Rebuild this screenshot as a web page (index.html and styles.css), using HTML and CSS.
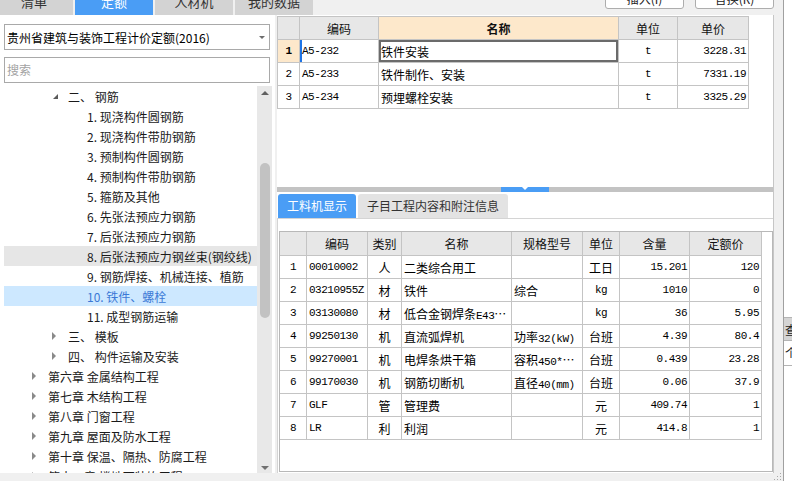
FILE: index.html
```html
<!DOCTYPE html>
<html lang="zh-CN">
<head>
<meta charset="utf-8">
<title>定额</title>
<link rel="stylesheet" href="styles.css">
</head>
<body>
<div class="app">
  <div class="topbar">
    <div class="tabs">
      <div class="tab">清单</div>
      <div class="tab on">定额</div>
      <div class="tab">人材机</div>
      <div class="tab">我的数据</div>
    </div>
    <div class="btns">
      <div class="btn">插入(I)</div>
      <div class="btn">替换(R)</div>
    </div>
  </div>
  <div class="main">
    <div class="left">
      <div class="select"><span>贵州省建筑与装饰工程计价定额(2016)</span><span class="caret"></span></div>
      <div class="search">搜索</div>
      <div class="treewrap">
        <div class="tree">
          <div class="row l1"><span class="ar e"></span>二、 钢筋</div>
          <div class="row l2"><span class="ar"></span>1. 现浇构件圆钢筋</div>
          <div class="row l2"><span class="ar"></span>2. 现浇构件带肋钢筋</div>
          <div class="row l2"><span class="ar"></span>3. 预制构件圆钢筋</div>
          <div class="row l2"><span class="ar"></span>4. 预制构件带肋钢筋</div>
          <div class="row l2"><span class="ar"></span>5. 箍筋及其他</div>
          <div class="row l2"><span class="ar"></span>6. 先张法预应力钢筋</div>
          <div class="row l2"><span class="ar"></span>7. 后张法预应力钢筋</div>
          <div class="row l2 hover"><span class="ar"></span>8. 后张法预应力钢丝束(钢绞线)</div>
          <div class="row l2"><span class="ar"></span>9. 钢筋焊接、机械连接、植筋</div>
          <div class="row l2 sel"><span class="ar"></span>10. 铁件、螺栓</div>
          <div class="row l2"><span class="ar"></span>11. 成型钢筋运输</div>
          <div class="row l1"><span class="ar c"></span>三、 模板</div>
          <div class="row l1"><span class="ar c"></span>四、 构件运输及安装</div>
          <div class="row l0"><span class="ar c"></span>第六章 金属结构工程</div>
          <div class="row l0"><span class="ar c"></span>第七章 木结构工程</div>
          <div class="row l0"><span class="ar c"></span>第八章 门窗工程</div>
          <div class="row l0"><span class="ar c"></span>第九章 屋面及防水工程</div>
          <div class="row l0"><span class="ar c"></span>第十章 保温、隔热、防腐工程</div>
          <div class="row l0"><span class="ar c"></span>第十一章 楼地面装饰工程</div>
        </div>
        <div class="vscroll">
          <span class="up"></span>
          <span class="thumb"></span>
          <span class="fill"></span>
          <span class="down"></span>
        </div>
      </div>
    </div>
    <div class="right">
      <div class="top">
        <table class="grid g1">
          <colgroup><col class="w22"><col class="w79"><col class="w240"><col class="w59"><col class="w71"></colgroup>
          <tr class="hd"><td></td><td>编码</td><td class="nm">名称</td><td>单位</td><td>单价</td></tr>
          <tr><td class="rn cur a">1</td><td class="a ind">A5-232</td><td class="selcell">铁件安装</td><td class="a ctr">t</td><td class="a rt">3228.31</td></tr>
          <tr><td class="rn a">2</td><td class="a">A5-233</td><td>铁件制作、安装</td><td class="a ctr">t</td><td class="a rt">7331.19</td></tr>
          <tr><td class="rn a">3</td><td class="a">A5-234</td><td>预埋螺栓安装</td><td class="a ctr">t</td><td class="a rt">3325.29</td></tr>
        </table>
      </div>
      <div class="split"><div class="handle"></div></div>
      <div class="subtabs">
        <div class="st on">工料机显示</div>
        <div class="st wide">子目工程内容和附注信息</div>
      </div>
      <div class="lower">
        <div class="gridbox">
          <table class="grid g2">
            <colgroup><col class="w27"><col class="w61"><col class="w34"><col class="w110"><col class="w71"><col class="w37"><col class="w70"><col class="w72"></colgroup>
            <tr class="hd"><td></td><td>编码</td><td>类别</td><td>名称</td><td>规格型号</td><td>单位</td><td>含量</td><td>定额价</td></tr>
            <tr><td class="rn a">1</td><td class="a">00010002</td><td class="ctr">人</td><td>二类综合用工</td><td></td><td class="ctr">工日</td><td class="a rt">15.201</td><td class="a rt">120</td></tr>
            <tr><td class="rn a">2</td><td class="a">03210955Z</td><td class="ctr">材</td><td>铁件</td><td>综合</td><td class="a ctr">kg</td><td class="a rt">1010</td><td class="a rt">0</td></tr>
            <tr><td class="rn a">3</td><td class="a">03130080</td><td class="ctr">材</td><td>低合金钢焊条<span class="a">E43</span>…</td><td></td><td class="a ctr">kg</td><td class="a rt">36</td><td class="a rt">5.95</td></tr>
            <tr><td class="rn a">4</td><td class="a">99250130</td><td class="ctr">机</td><td>直流弧焊机</td><td>功率<span class="a">32(kW)</span></td><td class="ctr">台班</td><td class="a rt">4.39</td><td class="a rt">80.4</td></tr>
            <tr><td class="rn a">5</td><td class="a">99270001</td><td class="ctr">机</td><td>电焊条烘干箱</td><td>容积<span class="a">450*</span>…</td><td class="ctr">台班</td><td class="a rt">0.439</td><td class="a rt">23.28</td></tr>
            <tr><td class="rn a">6</td><td class="a">99170030</td><td class="ctr">机</td><td>钢筋切断机</td><td>直径<span class="a">40(mm)</span></td><td class="ctr">台班</td><td class="a rt">0.06</td><td class="a rt">37.9</td></tr>
            <tr><td class="rn a">7</td><td class="a">GLF</td><td class="ctr">管</td><td>管理费</td><td></td><td class="ctr">元</td><td class="a rt">409.74</td><td class="a rt">1</td></tr>
            <tr><td class="rn a">8</td><td class="a">LR</td><td class="ctr">利</td><td>利润</td><td></td><td class="ctr">元</td><td class="a rt">414.8</td><td class="a rt">1</td></tr>
          </table>
        </div>
      </div>
    </div>
  </div>
  <div class="status">
    <svg class="grip" width="8" height="8" viewBox="0 0 8 8"><g fill="#a8a8a8"><rect x="6" y="0" width="1" height="1"/><rect x="3" y="3" width="1" height="1"/><rect x="6" y="3" width="1" height="1"/><rect x="0" y="6" width="1" height="1"/><rect x="3" y="6" width="1" height="1"/><rect x="6" y="6" width="1" height="1"/></g></svg>
  </div>
</div>
<div class="edge">
  <div class="ec g">查</div>
  <div class="ec">个</div>
</div>
</body>
</html>
```

FILE: styles.css
```css
* { box-sizing: border-box; }
html, body { margin: 0; padding: 0; }
body {
  width: 792px;
  height: 481px;
  overflow: hidden;
  background: #f0f0f0;
  font-family: "Noto Sans CJK SC", "Noto Sans", sans-serif;
  font-size: 12px;
  color: #000;
  display: flex;
}
.app { width: 783px; display: flex; flex-direction: column; }

/* top bar */
.topbar {
  height: 15px;
  display: flex;
  justify-content: space-between;
  align-items: flex-start;
  padding-right: 9px;
}
.tabs { display: flex; gap: 2px; margin-left: -5px; }
.tab {
  width: 78px;
  height: 26px;
  margin-top: -11px;
  background: #d3d3d3;
  color: #333;
  font-size: 13px;
  line-height: 26px;
  text-align: center;
}
.tab.on { background: #4a9df5; color: #fff; }
.btns { display: flex; gap: 11px; }
.btn {
  width: 79px;
  height: 20px;
  margin-top: -11px;
  background: #fff;
  border: 1px solid #adadad;
  border-radius: 3px;
  line-height: 18px;
  text-align: center;
  color: #222;
}

/* main */
.main { height: 458px; display: flex; }
.left {
  width: 275px;
  background: #fff;
  padding-left: 4px;
  display: flex;
  flex-direction: column;
}
.select {
  margin-top: 9px;
  width: 266px;
  height: 26px;
  border: 1px solid #a9a9a9;
  display: flex;
  align-items: center;
  justify-content: space-between;
  padding: 0 4px 0 2px;
  white-space: nowrap;
}
.caret {
  width: 0; height: 0;
  border-left: 3px solid transparent;
  border-right: 3px solid transparent;
  border-top: 3px solid #6d6d6d;
}
.search {
  margin-top: 7px;
  width: 266px;
  height: 26px;
  border: 1px solid #a9a9a9;
  color: #a3a3a3;
  padding-left: 2px;
  line-height: 24px;
}
.treewrap {
  margin-top: 3px;
  flex: 1;
  min-height: 0;
  display: flex;
  overflow: hidden;
}
.tree { width: 253px; overflow: hidden; }
.row {
  height: 20px;
  display: flex;
  align-items: center;
  white-space: nowrap;
  color: #1a1a1a;
}
.row.hover { background: #e6e6e6; }
.row.sel { background: #cde8ff; color: #3b78d6; }
.l0 { padding-left: 27px; }
.l1 { padding-left: 47px; }
.l2 { padding-left: 66px; }
.ar { width: 17px; flex: none; display: flex; align-items: center; }
.ar.c::before {
  content: "";
  margin-left: 1px;
  border-left: 4px solid #8a8a8a;
  border-top: 4px solid transparent;
  border-bottom: 4px solid transparent;
}
.ar.e::before {
  content: "";
  margin-left: 2px;
  border-right: 5px solid #5a5a5a;
  border-top: 5px solid transparent;
}
.vscroll {
  width: 15px;
  background: #e8e8e8;
  display: flex;
  flex-direction: column;
  align-items: center;
}
.up {
  margin-top: 5px;
  border-bottom: 4px solid #606060;
  border-left: 4px solid transparent;
  border-right: 4px solid transparent;
}
.thumb {
  margin-top: 68px;
  width: 10px;
  height: 155px;
  background: #c2c2c2;
  border-radius: 5px;
}
.fill { flex: 1; }
.down {
  margin-bottom: 3px;
  border-top: 4px solid #707070;
  border-left: 4px solid transparent;
  border-right: 4px solid transparent;
}

/* right */
.right {
  margin-left: 2px;
  width: 497px;
  background: #fff;
  border-right: 1px solid #c6c6c6;
  display: flex;
  flex-direction: column;
}
.top { height: 172px; padding-top: 1px; }
.grid {
  border-collapse: collapse;
  table-layout: fixed;
}
.g1 { width: 471px; }
.g2 { width: 482px; margin: -1px 0 0 -1px; }
.w22 { width: 22px; } .w79 { width: 79px; } .w240 { width: 240px; } .w59 { width: 59px; } .w71 { width: 71px; }
.w27 { width: 27px; } .w61 { width: 61px; } .w34 { width: 34px; } .w110 { width: 110px; } .w37 { width: 37px; } .w70 { width: 70px; } .w72 { width: 72px; }
.grid td {
  border: 1px solid #c4c4c4;
  padding: 0 2px;
  white-space: nowrap;
  overflow: hidden;
  height: 23px;
  vertical-align: middle;
}
.grid .hd td { background: #e7e7e7; text-align: center; color: #111; }
.g2 .hd td { height: 24px; }
.g1 .hd td.nm { background: #fde8cb; font-weight: bold; }
.a { font-family: "Liberation Mono", monospace; font-size: 11px; letter-spacing: -0.5px; }
.ctr { text-align: center; }
.rt { text-align: right; padding-right: 3px; }
.rn { text-align: center; }
.rn.cur { background: #fde8cb; font-weight: bold; }
.ind { box-shadow: inset 2px 0 0 #1e74e6; }
.selcell { box-shadow: inset 0 0 0 2px #6b6b6b; }

.split {
  height: 5px;
  background: #c3c3c3;
  display: flex;
  justify-content: center;
}
.handle {
  width: 48px;
  background: #4a9df5;
  display: flex;
  justify-content: center;
}
.handle::after {
  content: "";
  height: 0;
  border-top: 3px solid #fff;
  border-left: 3px solid transparent;
  border-right: 3px solid transparent;
}
.subtabs {
  height: 27px;
  display: flex;
  gap: 2px;
  padding: 2px 0 0 1px;
  border-bottom: 1px solid #d4d4d4;
}
.st {
  width: 78px;
  line-height: 24px;
  text-align: center;
  background: #e3e3e3;
  color: #333;
  border-radius: 3px 3px 0 0;
}
.st.on { background: #4a9df5; color: #fff; }
.st.wide { width: 150px; }
.lower {
  flex: 1;
  border-left: 1px solid #d4d4d4;
  padding: 12px 0 1px 1px;
  display: flex;
}
.gridbox {
  flex: 1;
  border: 1px solid #b8b8b8;
  overflow: hidden;
}

.status {
  flex: 1;
  display: flex;
  justify-content: flex-end;
  align-items: flex-end;
  padding: 0 1px 0 0;
}
.grip { display: block; }

.edge {
  width: 9px;
  border-left: 1px solid #a0a0a0;
  background: #fff;
  padding-top: 317px;
  display: flex;
  flex-direction: column;
}
.ec {
  height: 25px;
  line-height: 24px;
  border-bottom: 1px solid #b4b4b4;
  white-space: nowrap;
  overflow: hidden;
  padding-left: 1px;
  color: #222;
}
.ec.g { height: 24px; background: #d4d4d4; border-top: 1px solid #b4b4b4; }
```
